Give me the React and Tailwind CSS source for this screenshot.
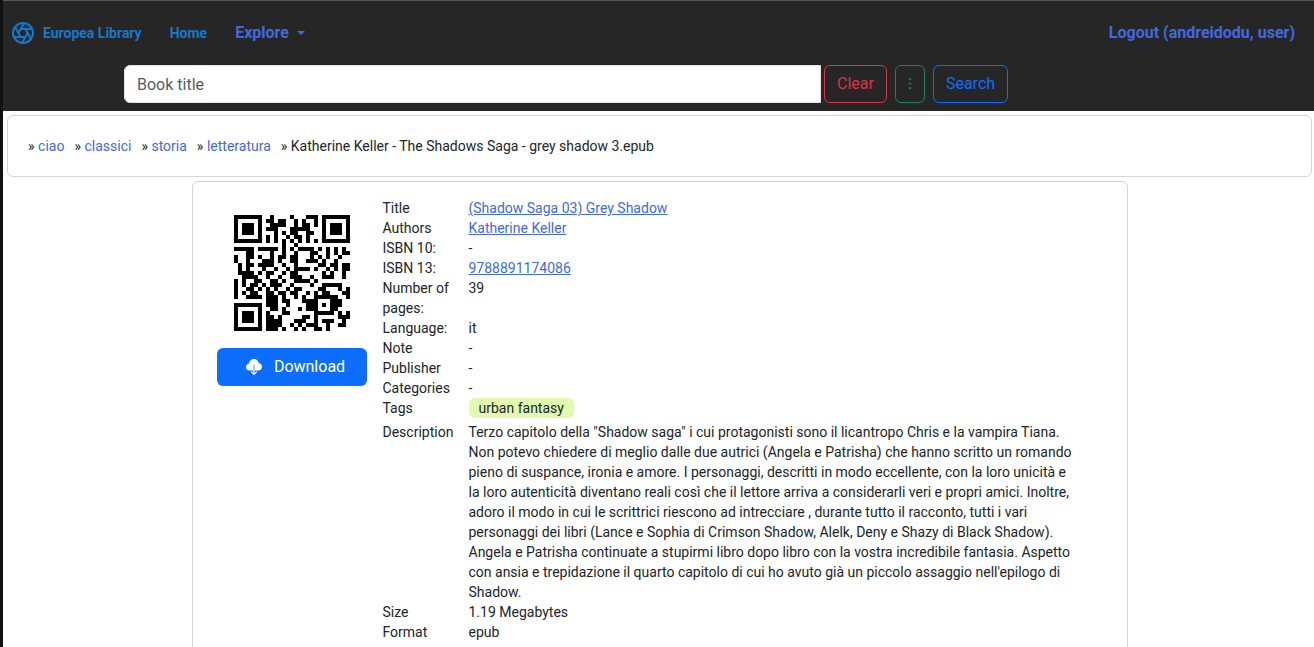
import { Aperture } from "lucide-react";

const QR_ROWS = [
  "#######..#....#...###.#######",
  "#.....#.##.##..#.#..#.#.....#",
  "#.###.#..####..#.##.#.#.###.#",
  "#.###.#.###...#####...#.###.#",
  "#.###.#...#.#.##..##..#.###.#",
  "#.....#.#.#..#.##.#...#.....#",
  "#######.#.#.#.#.#.#.#.#######",
  "............#..#.............",
  "#####.#####.#.#.####.#.#.#.#.",
  "...##....#..#..#...##..#.#.##",
  "#..##.#..#.##.##...#.#.#..#..",
  "#..#...###.#..##..###.#..#...",
  ".#.##.####..#..#.....##.##.##",
  ".#.#...#..#..#.####.#..#.#.##",
  ".####.#.##..#.##......#.#..#.",
  "..####..#..#..###..#..###..#.",
  "#.#..##..##.#..####.#........",
  "#.#.##.#.###..#....#..#####..",
  "#..##.#.#.#..#.##....##...#.#",
  "#.#.##..##.##.##..#.#.##...##",
  "#..####.###.#..#.#..######..#",
  "........###.##...####...###..",
  "#######.###..#....###.#.###..",
  "#.....#..##.#...#.###...##...",
  "#.###.#.#...##......#####.#.#",
  "#.###.#.##.#.....##.#.....###",
  "#.###.#.####...###..#.###..#.",
  "#.....#.####..#.#.###..#..##.",
  "#######.###.#..#.#..##.#.....",
];

const linkClass = "text-[#4169e1]";

function QrCode() {
  return (
    <svg
      role="img"
      aria-label="QR code"
      viewBox="0 0 29 29"
      shapeRendering="crispEdges"
      className="size-[116px] fill-black"
    >
      {QR_ROWS.flatMap((row, y) =>
        [...row].map((cell, x) =>
          cell === "#" ? <rect key={`${x}-${y}`} x={x} y={y} width="1" height="1" /> : null
        )
      )}
    </svg>
  );
}

function CloudIcon() {
  return (
    <svg aria-hidden="true" viewBox="0 0 16 16" className="size-4" fill="none">
      <path
        fill="#ffffff"
        d="M3.7 11.5A3.7 3.7 0 0 1 0 8c0-1.8 1.2-3.2 3-3.5C3.4 1.9 5.4 0 8 0c2.5 0 4.5 1.7 4.8 4.2C14.7 4.3 16 5.9 16 7.8c0 2.1-1.7 3.7-3.7 3.7z"
      />
      <path stroke="#6aa5ff" strokeWidth="1.2" d="M8 5.5v6" />
      <path stroke="#ffffff" strokeWidth="1.2" strokeLinecap="round" strokeLinejoin="round" d="M8 11.5v3.5M5.5 12.8 8 15.3l2.5-2.5" />
    </svg>
  );
}

const details = [
  ["Title", <a href="#title" className={`${linkClass} underline`}>(Shadow Saga 03) Grey Shadow</a>],
  ["Authors", <a href="#author" className={`${linkClass} underline`}>Katherine Keller</a>],
  ["ISBN 10:", "-"],
  ["ISBN 13:", <a href="#isbn" className={`${linkClass} underline`}>9788891174086</a>],
  ["Number of pages:", "39"],
  ["Language:", "it"],
  ["Note", "-"],
  ["Publisher", "-"],
  ["Categories", "-"],
  ["Tags", <span className="mb-1 inline-block rounded-md bg-[#e2f9b0] px-2.5 align-top">urban fantasy</span>],
  [
    "Description",
    "Terzo capitolo della \"Shadow saga\" i cui protagonisti sono il licantropo Chris e la vampira Tiana. Non potevo chiedere di meglio dalle due autrici (Angela e Patrisha) che hanno scritto un romando pieno di suspance, ironia e amore. I personaggi, descritti in modo eccellente, con la loro unicità e la loro autenticità diventano reali così che il lettore arriva a considerarli veri e propri amici. Inoltre, adoro il modo in cui le scrittrici riescono ad intrecciare , durante tutto il racconto, tutti i vari personaggi dei libri (Lance e Sophia di Crimson Shadow, Alelk, Deny e Shazy di Black Shadow). Angela e Patrisha continuate a stupirmi libro dopo libro con la vostra incredibile fantasia. Aspetto con ansia e trepidazione il quarto capitolo di cui ho avuto già un piccolo assaggio nell'epilogo di Shadow.",
  ],
  ["Size", "1.19 Megabytes"],
  ["Format", "epub"],
];

const crumbs = ["ciao", "classici", "storia", "letteratura"];

export default function App() {
  return (
    <div className="h-screen overflow-hidden border-l-3 border-[#111111] bg-white font-['Roboto',sans-serif] text-sm leading-5 text-[#212529]">
      <header className="border-t border-[#525456] bg-[#262626] pb-2">
        <nav className="flex h-16 items-center pr-[19px] pl-2 font-bold">
          <a href="#library" className="flex items-center gap-2 text-[#1479cc]">
            <Aperture className="size-6" strokeWidth={2} />
            Europea Library
          </a>
          <a href="#home" className="ml-7 text-[#1479cc]">Home</a>
          <button type="button" className="ml-7 flex items-center gap-2 text-base text-[#4169e1]">
            Explore
            <span className="border-x-4 border-t-4 border-x-transparent border-t-[#4169e1]" />
          </button>
          <a href="#logout" className="ml-auto text-base text-[#4169e1]">Logout (andreidodu, user)</a>
        </nav>
        <form className="ml-[121px] flex text-base leading-6" onSubmit={(e) => e.preventDefault()}>
          <input
            type="text"
            aria-label="Book title"
            placeholder="Book title"
            className="h-[38px] w-[697px] rounded-l-md border border-[#dee2e6] bg-white px-3 text-[#212529] placeholder:text-[#595c5f]"
          />
          <button type="button" className="ml-[3px] rounded-md border border-[#dc3545] px-3 text-[#dc3545]">Clear</button>
          <button type="button" aria-label="More options" className="ml-2 rounded-md border border-[#198754] px-3 text-[#198754]">⁝</button>
          <button type="submit" className="ml-2 rounded-md border border-[#0d6efd] px-3 text-[#0d6efd]">Search</button>
        </form>
      </header>

      <main className="pt-1 pr-0.5 pl-1">
        <nav aria-label="Breadcrumb" className="rounded-md border border-[#d3d4d5] p-5">
          <ol className="flex gap-2.5">
            {crumbs.map((crumb) => (
              <li key={crumb}>
                » <a href={`#${crumb}`} className={linkClass}>{crumb}</a>
              </li>
            ))}
            <li>» Katherine Keller - The Shadows Saga - grey shadow 3.epub</li>
          </ol>
        </nav>

        <article className="mx-auto mt-1 flex max-w-[936px] items-start rounded-md border border-[#d3d4d5] px-6 py-4">
          <div className="flex w-[150px] shrink-0 flex-col items-center gap-[17px] pt-[17px]">
            <QrCode />
            <button type="button" className="flex h-[38px] w-full items-center justify-center gap-3 rounded-md bg-[#0d6efd] pl-2 text-base text-white">
              <CloudIcon />
              Download
            </button>
          </div>
          <table className="ml-4 w-full table-fixed">
            <tbody>
              {details.map(([label, value]) => (
                <tr key={label}>
                  <th scope="row" className="w-[86px] pr-3 text-left align-top font-normal">{label}</th>
                  <td className="pr-7 align-top">{value}</td>
                </tr>
              ))}
            </tbody>
          </table>
        </article>
      </main>
    </div>
  );
}
